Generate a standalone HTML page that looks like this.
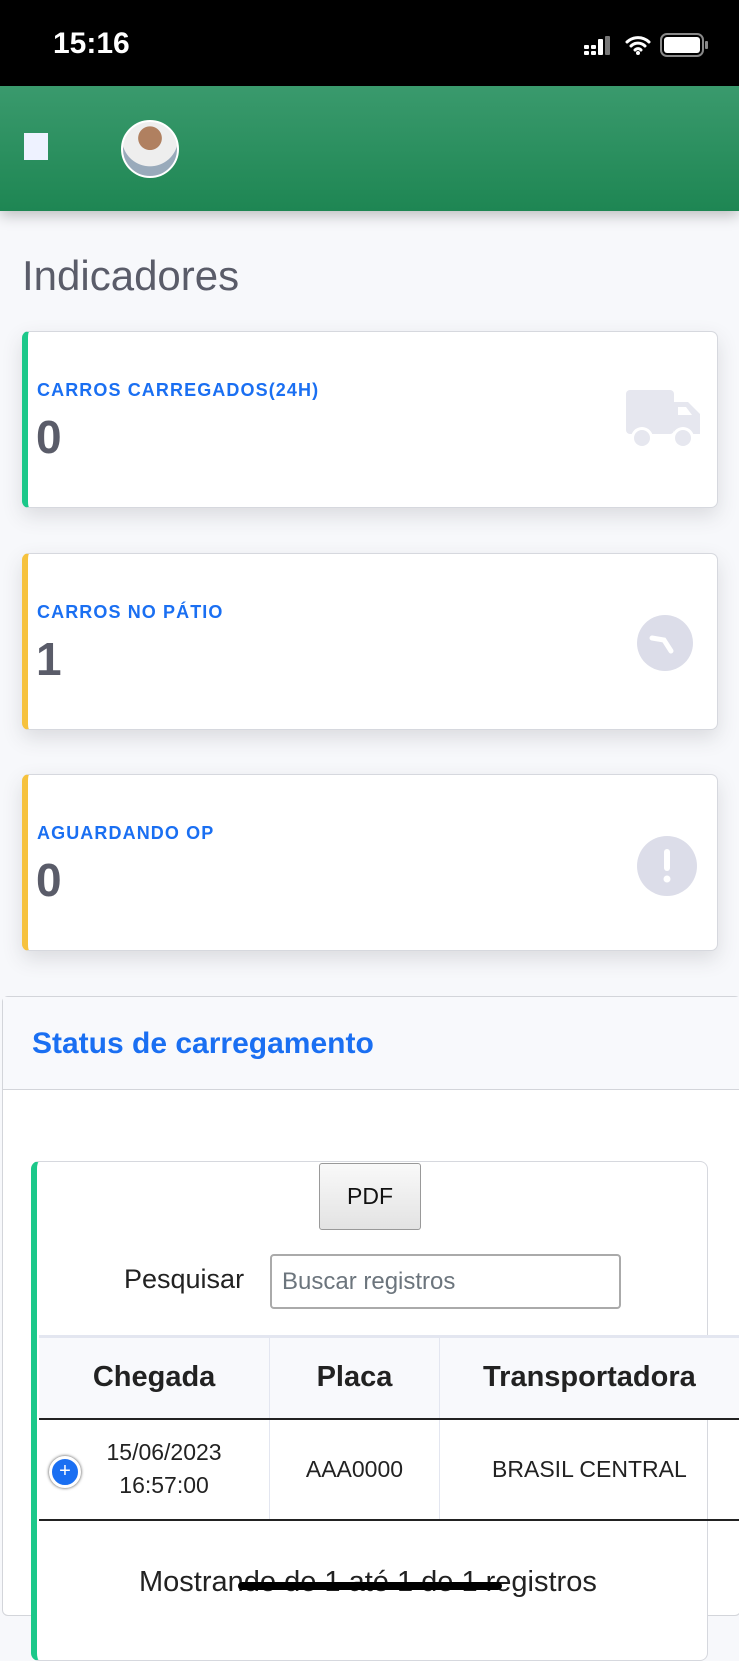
<!DOCTYPE html>
<html><head><meta charset="utf-8"><style>
*{box-sizing:border-box;margin:0;padding:0}
body{width:739px;height:1600px;overflow:hidden;background:#f7f8fb;font-family:"Liberation Sans",sans-serif;position:relative}
.sb{position:absolute;left:0;top:0;width:739px;height:86px;background:#000;color:#fff}
.sb .t{position:absolute;left:53px;top:27px;font-size:30px;font-weight:bold}
.hd{position:absolute;left:0;top:86px;width:739px;height:125px;background:linear-gradient(#3a9a6d,#1e8653);box-shadow:0 4px 14px rgba(0,0,0,.25)}
.h1{position:absolute;left:22px;top:252px;font-size:42px;color:#5a5c69}
.card{position:absolute;left:22px;width:696px;height:177px;background:#fff;border:1px solid #d6d8de;border-radius:7px;border-left:6px solid #1cc88a;box-shadow:0 8px 20px rgba(58,59,69,.15)}
.card.y{border-left-color:#f6c23e}
.card .l{position:absolute;left:9px;top:48px;font-size:18px;font-weight:bold;color:#1a6ff2;letter-spacing:1.1px}
.card .n{position:absolute;left:8px;top:78px;font-size:46px;font-weight:bold;color:#5a5c69}
.card svg{position:absolute}
.sec{position:absolute;left:2px;top:996px;width:739px;height:620px;background:#fff;border:1px solid #d3d5da;border-radius:6px}
.sec .h{height:93px;background:#f8f9fc;border-bottom:1px solid #d3d5da;padding:30px 0 0 29px;font-size:30px;font-weight:bold;color:#1a6ff2}
.in{position:absolute;left:31px;top:1161px;width:677px;height:500px;background:#fff;border:1px solid #d6d8de;border-left:6px solid #1cc88a;border-radius:8px}
.pdf{position:absolute;left:319px;top:1163px;width:102px;height:67px;border:1px solid #999;border-radius:3px;background:linear-gradient(#f9f9f9,#e3e3e3);font-size:23px;text-align:center;line-height:65px;color:#111}
.lb{position:absolute;left:124px;top:1264px;font-size:27px;color:#222}
.ip{position:absolute;left:270px;top:1254px;width:351px;height:55px;border:2px solid #aaa;border-radius:4px;font-size:24px;color:#6c757d;padding:12px 10px}
table{position:absolute;left:39px;top:1335px;border-collapse:collapse}
th{background:#f8f9fc;height:82px;font-size:29px;color:#222;border-right:1px solid #e3e6f0;border-top:3px solid #e3e6f0;border-bottom:2px solid #222}
td{height:101px;font-size:23px;color:#222;text-align:center;border-right:1px solid #e3e6f0;border-bottom:2px solid #222;line-height:33px}
.ft{position:absolute;left:139px;top:1566px;font-size:29px;color:#222}
.bar{position:absolute;left:238px;top:1582px;width:264px;height:8px;border-radius:4px;background:#000}
</style></head><body>
<div class="sb"><div class="t">15:16</div>
<svg style="position:absolute;left:584px;top:36px" width="30" height="20"><g fill="#fff"><rect x="0" y="9" width="5" height="4" rx="1"/><rect x="0" y="15" width="5" height="4" rx="1"/><rect x="7" y="9" width="5" height="4" rx="1"/><rect x="7" y="15" width="5" height="4" rx="1"/><rect x="14" y="3" width="5" height="16" rx="1"/><rect x="21" y="0" width="5" height="19" rx="1" fill="#777"/></g></svg>
<svg style="position:absolute;left:625px;top:34px" width="26" height="22"><path d="M2 8a16 16 0 0 1 22 0M6 12a10 10 0 0 1 14 0M10 16a4 4 0 0 1 6 0" stroke="#fff" stroke-width="3" fill="none" stroke-linecap="round"/><circle cx="13" cy="19" r="2" fill="#fff"/></svg>
<svg style="position:absolute;left:660px;top:32px" width="50" height="26"><rect x="1" y="2" width="42" height="22" rx="6" stroke="#888" stroke-width="2" fill="none"/><rect x="4" y="5" width="36" height="16" rx="3" fill="#fff"/><rect x="45" y="9" width="3" height="8" rx="1" fill="#888"/></svg>
</div>
<div class="hd">
<div style="position:absolute;left:24px;top:47px;width:24px;height:27px;background:#eef2ff"></div>
<div style="position:absolute;left:121px;top:34px;width:58px;height:58px;border-radius:50%;background:radial-gradient(circle at 50% 30%,#b08060 0 25%,#eee 26% 60%,#9ab 61%);border:2px solid #fff"></div>
</div>
<div class="h1">Indicadores</div>
<div class="card" style="top:331px"><div class="l">CARROS CARREGADOS(24H)</div><div class="n">0</div>
<svg style="left:598px;top:58px" width="76" height="60" viewBox="0 0 76 60"><g fill="#e6e7ef"><rect x="0" y="0" width="48" height="44" rx="4"/><path d="M48 12h14l12 12v20H48z"/><circle cx="16" cy="48" r="11" fill="#fff"/><circle cx="16" cy="48" r="8"/><circle cx="57" cy="48" r="11" fill="#fff"/><circle cx="57" cy="48" r="8"/></g><path d="M52 17h8l6 8h-14z" fill="#fff"/></svg></div>
<div class="card y" style="top:553px"><div class="l">CARROS NO PÁTIO</div><div class="n">1</div>
<svg style="left:608px;top:60px" width="58" height="58"><circle cx="29" cy="29" r="28" fill="#dcdde9"/><path d="M16 24l12 2 7 11" stroke="#fff" stroke-width="5" fill="none" stroke-linecap="round"/></svg></div>
<div class="card y" style="top:774px"><div class="l">AGUARDANDO OP</div><div class="n">0</div>
<svg style="left:608px;top:60px" width="62" height="62"><circle cx="31" cy="31" r="30" fill="#dcdde9"/><rect x="28" y="14" width="6" height="22" rx="3" fill="#fff"/><circle cx="31" cy="44" r="3.5" fill="#fff"/></svg></div>
<div class="sec"><div class="h">Status de carregamento</div></div>
<div class="in"></div>
<div class="pdf">PDF</div>
<div class="lb">Pesquisar</div>
<div class="ip">Buscar registros</div>
<table><tr><th style="width:231px">Chegada</th><th style="width:170px">Placa</th><th style="width:300px;border-right:none">Transportadora</th></tr>
<tr><td style="position:relative;padding-left:20px">15/06/2023<br>16:57:00<span style="position:absolute;left:10px;top:36px;width:32px;height:32px;border-radius:50%;background:#1a6ff2;border:3px solid #fff;box-shadow:0 0 3px #444;color:#fff;font-size:20px;line-height:24px">+</span></td><td>AAA0000</td><td style="border-right:none">BRASIL CENTRAL</td></tr></table>
<div class="ft">Mostrando de 1 até 1 de 1 registros</div>
<div class="bar"></div>
</body></html>
